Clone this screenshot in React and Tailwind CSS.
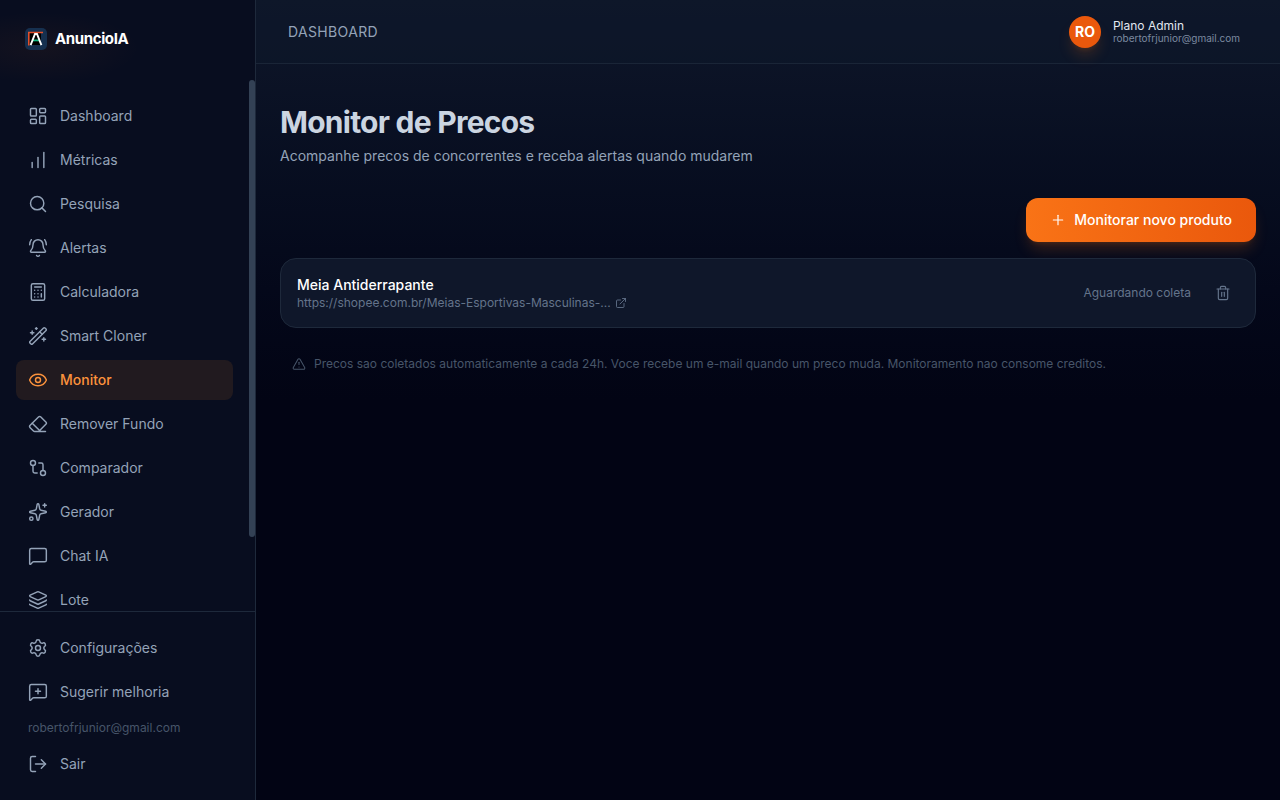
// Price monitor page - sidebar, top bar and list of tracked products

import React from 'react';
import {
  BellRing,
  Calculator,
  ChartNoAxesColumnIncreasing,
  Eraser,
  ExternalLink,
  Eye,
  GitCompare,
  Layers,
  LayoutDashboard,
  LogOut,
  MessageSquare,
  MessageSquarePlus,
  Plus,
  Search,
  Settings,
  Sparkles,
  Trash2,
  TriangleAlert,
  WandSparkles,
} from 'lucide-react';
import { clsx } from 'clsx';

const USER_EMAIL = 'robertofrjunior@gmail.com';

const navItems = [
  { label: 'Dashboard', icon: LayoutDashboard },
  { label: 'Métricas', icon: ChartNoAxesColumnIncreasing },
  { label: 'Pesquisa', icon: Search },
  { label: 'Alertas', icon: BellRing },
  { label: 'Calculadora', icon: Calculator },
  { label: 'Smart Cloner', icon: WandSparkles },
  { label: 'Monitor', icon: Eye, active: true },
  { label: 'Remover Fundo', icon: Eraser },
  { label: 'Comparador', icon: GitCompare },
  { label: 'Gerador', icon: Sparkles },
  { label: 'Chat IA', icon: MessageSquare },
  { label: 'Lote', icon: Layers },
];

const products = [
  {
    name: 'Meia Antiderrapante',
    url: 'https://shopee.com.br/Meias-Esportivas-Masculinas-...',
    status: 'Aguardando coleta',
  },
];

// ─── Sidebar ──────────────────────────────────────────────────────────────────
const itemClass = 'flex h-10 w-full shrink-0 items-center gap-3 rounded-lg px-3 text-sm';

const NavItem = ({ label, icon: Icon, active }) => (
  <a
    href="#"
    aria-current={active ? 'page' : undefined}
    className={clsx(
      itemClass,
      active ? 'bg-[#211a1f] font-medium text-[#fb923c]' : 'text-[#94a3b8] hover:bg-white/5'
    )}
  >
    <Icon className="size-5" strokeWidth={1.75} />
    {label}
  </a>
);

const Logo = () => (
  <svg viewBox="0 0 22 22" className="size-[22px]" aria-hidden="true">
    <rect width="22" height="22" rx="5" fill="#16304f" />
    <rect x="4" y="4.5" width="12" height="12.5" fill="#000" />
    <path d="M3.8 17.5V4.5H18" fill="none" stroke="#e2502c" strokeWidth="1.6" />
    <path d="M7.5 12.4h7" stroke="#10b981" strokeWidth="1.8" />
    <path d="M5.6 17.2 10 6h2l4.4 11.2" fill="none" stroke="#fff" strokeWidth="1.9" />
  </svg>
);

const Sidebar = () => (
  <aside className="flex w-64 shrink-0 flex-col border-r border-[#1e293b] bg-[#080d1f]">
    <div className="flex h-20 shrink-0 items-center gap-2 bg-[radial-gradient(ellipse_100px_36px_at_40px_48px,rgba(249,115,22,0.05),transparent)] px-[25px] pb-0.5">
      <Logo />
      <span className="text-[15px] font-bold tracking-tight text-white">AnuncioIA</span>
    </div>
    <div className="flex min-h-0 flex-1">
      <nav
        aria-label="Principal"
        className="flex min-w-0 flex-1 flex-col gap-1 overflow-y-auto px-4 pt-4 pb-20 [scrollbar-width:none]"
      >
        {navItems.map((item) => (
          <NavItem key={item.label} {...item} />
        ))}
      </nav>
      {/* scroll track */}
      <div className="w-1.5 shrink-0" aria-hidden="true">
        <div className="h-[86%] rounded-full bg-[#334155]" />
      </div>
    </div>
    <div className="flex shrink-0 flex-col border-t border-[#1e293b] p-4">
      <div className="flex flex-col gap-1">
        <NavItem label="Configurações" icon={Settings} />
        <NavItem label="Sugerir melhoria" icon={MessageSquarePlus} />
      </div>
      <p className="px-3 py-2 text-xs text-[#475569]">{USER_EMAIL}</p>
      <button type="button" className={clsx(itemClass, 'text-[#94a3b8] hover:bg-white/5')}>
        <LogOut className="size-5" strokeWidth={1.75} />
        Sair
      </button>
    </div>
  </aside>
);

// ─── Top bar ──────────────────────────────────────────────────────────────────
const TopBar = () => (
  <header className="flex h-16 shrink-0 items-center justify-between border-b border-[#1e293b]/80 bg-[#0d1729]/60 px-8">
    <span className="text-sm tracking-wide text-[#94a3b8] uppercase">Dashboard</span>
    <button type="button" className="flex items-center gap-3 pr-2 text-left">
      <span className="flex size-8 items-center justify-center rounded-full bg-[#ea580c] text-sm font-bold text-white shadow-lg shadow-[#f97316]/20">
        RO
      </span>
      <span className="flex flex-col">
        <span className="text-xs leading-3 text-[#e2e8f0]">Plano Admin</span>
        <span className="text-[10px] leading-3 text-[#7c8aa0]">{USER_EMAIL}</span>
      </span>
    </button>
  </header>
);

// ─── Product row ──────────────────────────────────────────────────────────────
const ProductCard = ({ name, url, status }) => (
  <li className="flex items-center justify-between rounded-2xl border border-[#1e293b] bg-[#0f172a] p-4">
    <div className="min-w-0">
      <h2 className="text-sm font-medium text-white">{name}</h2>
      <a href="#" className="flex items-center gap-1 text-xs text-[#64748b]">
        {url}
        <ExternalLink className="size-3" strokeWidth={1.75} />
      </a>
    </div>
    <div className="flex items-center gap-4">
      <span className="text-xs text-[#64748b]">{status}</span>
      <button type="button" aria-label={`Remover ${name}`} className="p-2 text-[#64748b]">
        <Trash2 className="size-4" strokeWidth={1.75} />
      </button>
    </div>
  </li>
);

export default function App() {
  return (
    <div className="flex h-screen bg-[#020416] font-['Inter',sans-serif] antialiased">
      <Sidebar />
      <div className="flex min-w-0 flex-1 flex-col bg-linear-to-b from-[#0f172a] to-[#020414] to-50%">
        <TopBar />
        <main className="flex-1 overflow-y-auto px-6 pt-10">
          <h1 className="text-3xl font-bold tracking-tight text-[#cbd5e1]">Monitor de Precos</h1>
          <p className="mt-1.5 text-sm text-[#94a3b8]">
            Acompanhe precos de concorrentes e receba alertas quando mudarem
          </p>
          <div className="mt-8 flex justify-end">
            <button
              type="button"
              className="flex h-11 items-center gap-2 rounded-xl bg-linear-to-r/srgb from-[#f97316] to-[#ea580c] px-6 text-sm font-medium text-white shadow-lg shadow-[#f97316]/20"
            >
              <Plus className="size-4" strokeWidth={1.75} />
              Monitorar novo produto
            </button>
          </div>
          <ul className="mt-4 flex flex-col gap-3">
            {products.map((product) => (
              <ProductCard key={product.name} {...product} />
            ))}
          </ul>
          <p className="mt-7 flex items-center gap-2 px-3 text-xs text-[#475569]">
            <TriangleAlert className="size-3.5" strokeWidth={1.75} />
            Precos sao coletados automaticamente a cada 24h. Voce recebe um e-mail quando um preco
            muda. Monitoramento nao consome creditos.
          </p>
        </main>
      </div>
    </div>
  );
}
